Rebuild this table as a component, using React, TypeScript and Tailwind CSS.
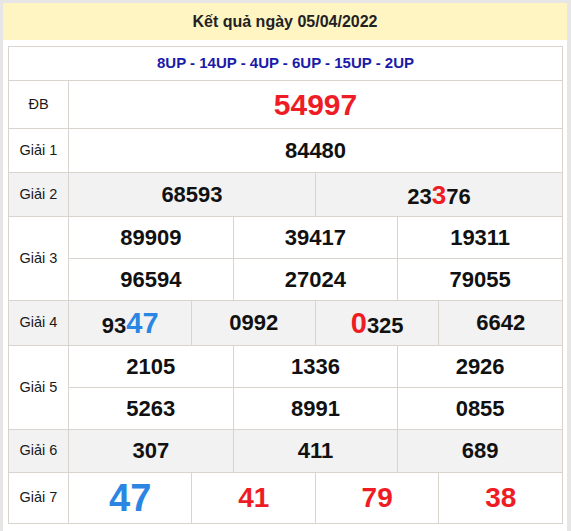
import React from 'react'

const border = 'border border-[#dad4ce]'
const num = 'text-[22px] font-bold text-[#111] leading-none'
const red = 'text-[#ee1d25]'
const blue = 'text-[#2b86e3]'

function Label({ children, rowSpan, gray }: { children: React.ReactNode; rowSpan?: number; gray?: boolean }) {
  return (
    <td
      rowSpan={rowSpan}
      className={`${border} text-center align-middle text-[14.5px] text-[#1a1a1a] ${gray ? 'bg-[#f2f2f2]' : ''}`}
    >
      {children}
    </td>
  )
}

function Num({ span, children, gray, h }: { span: number; children: React.ReactNode; gray?: boolean; h: string }) {
  return (
    <td colSpan={span} className={`${border} ${h} text-center align-middle ${num} ${gray ? 'bg-[#f2f2f2]' : ''}`}>
      {children}
    </td>
  )
}

export default function App() {
  const g3a = ['89909', '39417', '19311']
  const g3b = ['96594', '27024', '79055']
  const g5a = ['2105', '1336', '2926']
  const g5b = ['5263', '8991', '0855']
  const g6 = ['307', '411', '689']

  return (
    <div className="h-[531px] w-[571px] bg-[#e6e6e6] pl-[3px] pr-[4px] pt-[3px] font-['Liberation_Sans',Arial,sans-serif]">
      <div className="h-full bg-white">
        {/* Tiêu đề */}
        <div className="flex h-[37px] items-center justify-center bg-[#fff5c3] text-[16px] font-bold text-[#222]">
          Kết quả ngày 05/04/2022
        </div>

        <div className="ml-[5px] mr-[4px] mt-[6px]">
          <table className="w-full table-fixed border-collapse">
            <colgroup>
              <col className="w-[60px]" />
              {Array.from({ length: 12 }).map((_, i) => (
                <col key={i} />
              ))}
            </colgroup>
            <tbody>
              <tr>
                <td colSpan={13} className={`${border} h-[34px] text-center align-middle text-[15px] font-bold text-[#1b1ba8]`}>
                  8UP - 14UP - 4UP - 6UP - 15UP - 2UP
                </td>
              </tr>
              <tr>
                <Label>ĐB</Label>
                <td colSpan={12} className={`${border} h-[48px] text-center align-middle text-[30px] font-bold leading-none ${red}`}>
                  54997
                </td>
              </tr>
              <tr>
                <Label>Giải 1</Label>
                <Num span={12} h="h-[44px]">84480</Num>
              </tr>
              <tr>
                <Label gray>Giải 2</Label>
                <Num span={6} gray h="h-[44px]">68593</Num>
                <Num span={6} gray h="h-[44px]">
                  23<span className={`text-[26px] ${red}`}>3</span>76
                </Num>
              </tr>
              <tr>
                <Label rowSpan={2}>Giải 3</Label>
                {g3a.map((n) => (
                  <Num key={n} span={4} h="h-[42px]">{n}</Num>
                ))}
              </tr>
              <tr>
                {g3b.map((n) => (
                  <Num key={n} span={4} h="h-[42px]">{n}</Num>
                ))}
              </tr>
              <tr>
                <Label gray>Giải 4</Label>
                <Num span={3} gray h="h-[45px]">
                  93<span className={`text-[29px] ${blue}`}>47</span>
                </Num>
                <Num span={3} gray h="h-[45px]">0992</Num>
                <Num span={3} gray h="h-[45px]">
                  <span className={`text-[29px] ${red}`}>0</span>325
                </Num>
                <Num span={3} gray h="h-[45px]">6642</Num>
              </tr>
              <tr>
                <Label rowSpan={2}>Giải 5</Label>
                {g5a.map((n) => (
                  <Num key={n} span={4} h="h-[42px]">{n}</Num>
                ))}
              </tr>
              <tr>
                {g5b.map((n) => (
                  <Num key={n} span={4} h="h-[42px]">{n}</Num>
                ))}
              </tr>
              <tr>
                <Label gray>Giải 6</Label>
                {g6.map((n) => (
                  <Num key={n} span={4} gray h="h-[43px]">{n}</Num>
                ))}
              </tr>
              <tr>
                <Label>Giải 7</Label>
                <td colSpan={3} className={`${border} h-[51px] text-center align-middle text-[38px] font-bold leading-none ${blue}`}>
                  47
                </td>
                {['41', '79', '38'].map((n) => (
                  <td key={n} colSpan={3} className={`${border} h-[51px] text-center align-middle text-[28px] font-bold leading-none ${red}`}>
                    {n}
                  </td>
                ))}
              </tr>
            </tbody>
          </table>
        </div>
      </div>
    </div>
  )
}
